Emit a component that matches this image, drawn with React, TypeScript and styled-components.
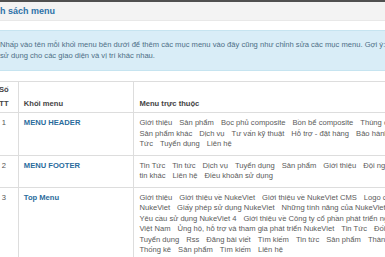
import React from "react";
import styled, { createGlobalStyle } from "styled-components";

const GlobalStyle = createGlobalStyle`
  html, body { margin: 0; padding: 0; background: #ffffff; overflow: hidden; }
  body { font-family: "Liberation Sans", Arial, sans-serif; }
`;

const Page = styled.div`
  margin-left: -18px;
  width: 640px;
`;

const TopRule = styled.div`
  height: 2px;
  background: #505050;
`;

const TitleBar = styled.div`
  height: 18px;
  background: #f3f3f3;
  border-bottom: 1px solid #e8e8e8;
  display: flex;
  align-items: center;
  padding-left: 1px;
`;

const Title = styled.h2`
  margin: 0;
  font-size: 9px;
  font-weight: bold;
  color: #2e72a8;
`;

const InfoBox = styled.div`
  margin-top: 9px;
  background: #d9edf7;
  border-top: 1px solid #c6e4f0;
  border-bottom: 1px solid #c6e4f0;
  padding: 8px 10px 9px 18px;
  color: #4d6e86;
  font-size: 7.6px;
  line-height: 11px;
`;

const InfoLine = styled.div`
  white-space: nowrap;
`;

const Table = styled.table`
  margin-top: 10px;
  margin-left: 8px;
  border-collapse: collapse;
  font-size: 7.6px;
  color: #5a5a5a;
`;

const HeadCell = styled.th<{ $w: number; $center?: boolean }>`
  width: ${(p) => p.$w}px;
  border: 1px solid #dddddd;
  border-left: ${(p) => (p.$center ? "none" : "1px solid #dddddd")};
  padding: 1px 5px 2px;
  text-align: ${(p) => (p.$center ? "center" : "left")};
  vertical-align: bottom;
  font-weight: bold;
  color: #444;
  line-height: 13.5px;
`;

const Cell = styled.td<{ $center?: boolean }>`
  border: 1px solid #dddddd;
  border-left: ${(p) => (p.$center ? "none" : "1px solid #dddddd")};
  padding: 5px 5px;
  vertical-align: top;
  text-align: ${(p) => (p.$center ? "center" : "left")};
  line-height: 10.5px;
  color: #555;
`;

const BlockLink = styled.a`
  color: #2a6b9c;
  font-weight: bold;
  text-decoration: none;
`;

const Line = styled.div`
  display: flex;
  gap: 7px;
  white-space: nowrap;
`;

const Item = styled.span`
  color: #5a5a5a;
`;

type Row = { id: number; name: string; lines: string[][] };

const rows: Row[] = [
  {
    id: 1,
    name: "MENU HEADER",
    lines: [
      ["Giới thiệu", "Sản phẩm", "Bọc phủ composite", "Bồn bể composite", "Thùng chứa composite"],
      ["Sản phẩm khác", "Dịch vụ", "Tư vấn kỹ thuật", "Hỗ trợ - đặt hàng", "Bảo hành", "Tin"],
      ["Tức", "Tuyển dụng", "Liên hệ"],
    ],
  },
  {
    id: 2,
    name: "MENU FOOTER",
    lines: [
      ["Tin Tức", "Tin tức", "Dịch vụ", "Tuyển dụng", "Sản phẩm", "Giới thiệu", "Đội ngũ", "Bản"],
      ["tin khác", "Liên hệ", "Điều khoản sử dụng"],
    ],
  },
  {
    id: 3,
    name: "Top Menu",
    lines: [
      ["Giới thiệu", "Giới thiệu về NukeViet", "Giới thiệu về NukeViet CMS", "Logo của"],
      ["NukeViet", "Giấy phép sử dụng NukeViet", "Những tính năng của NukeViet CMS"],
      ["Yêu cầu sử dụng NukeViet 4", "Giới thiệu về Công ty cổ phần phát triển nguồn mở"],
      ["Việt Nam", "Ủng hộ, hỗ trợ và tham gia phát triển NukeViet", "Tin Tức", "Đối tác"],
      ["Tuyển dụng", "Rss", "Đăng bài viết", "Tìm kiếm", "Tin tức", "Sản phẩm", "Thành viên"],
      ["Thống kê", "Sản phẩm", "Tìm kiếm", "Liên hệ"],
    ],
  },
];

export default function App() {
  return (
    <>
      <GlobalStyle />
      <Page>
        <TopRule />
        <TitleBar>
          <Title>Danh sách menu</Title>
        </TitleBar>
        <InfoBox>
          <InfoLine>
            Nhấp vào tên mỗi khối menu bên dưới để thêm các mục menu vào đây cũng như chỉnh sửa các mục menu. Gợi ý: tạo nhiều khối menu để
          </InfoLine>
          <InfoLine>sử dụng cho các giao diện và vị trí khác nhau.</InfoLine>
        </InfoBox>
        <Table>
          <thead>
            <tr>
              <HeadCell $w={18} $center>
                Số TT
              </HeadCell>
              <HeadCell $w={106}>Khối menu</HeadCell>
              <HeadCell $w={480}>Menu trực thuộc</HeadCell>
            </tr>
          </thead>
          <tbody>
            {rows.map((r) => (
              <tr key={r.id}>
                <Cell $center>{r.id}</Cell>
                <Cell>
                  <BlockLink href="#">{r.name}</BlockLink>
                </Cell>
                <Cell>
                  {r.lines.map((l, i) => (
                    <Line key={i}>
                      {l.map((t, j) => (
                        <Item key={j}>{t}</Item>
                      ))}
                    </Line>
                  ))}
                </Cell>
              </tr>
            ))}
          </tbody>
        </Table>
      </Page>
    </>
  );
}
